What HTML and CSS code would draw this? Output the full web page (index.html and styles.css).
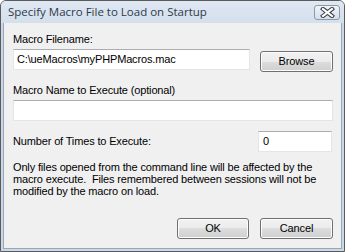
FILE: index.html
```html
<!DOCTYPE html>
<html>
<head>
<meta charset="utf-8">
<link rel="stylesheet" href="styles.css">
</head>
<body>
<div class="window">
  <div class="titlebar">
    <span class="title">Specify Macro File to Load on Startup</span>
    <span class="close"><svg width="15" height="11" viewBox="0 0 15 11"><path d="M3 2 L12 9 M12 2 L3 9" stroke="#3a3f48" stroke-width="4.2" stroke-linecap="square"/><path d="M3 2 L12 9 M12 2 L3 9" stroke="#ffffff" stroke-width="2.2" stroke-linecap="square"/></svg></span>
  </div>
  <div class="client">
    <div class="label l1">Macro Filename:</div>
    <div class="row r1">
      <div class="edit e1">C:\ueMacros\myPHPMacros.mac</div>
      <div class="btn browse">Browse</div>
    </div>
    <div class="label l2">Macro Name to Execute (optional)</div>
    <div class="edit e2"></div>
    <div class="row r3">
      <div class="label">Number of Times to Execute:</div>
      <div class="edit e3">0</div>
    </div>
    <p class="note">Only files opened from the command line will be affected by the macro execute.&nbsp; Files remembered between sessions will not be modified by the macro on load.</p>
    <div class="row buttons">
      <div class="btn ok">OK</div>
      <div class="btn cancel">Cancel</div>
    </div>
  </div>
</div>
</body>
</html>
```

FILE: styles.css
```css
html, body {
  margin: 0;
  padding: 0;
  background: #ffffff;
}
.window {
  width: 345px;
  height: 252px;
  box-sizing: border-box;
  border: 1px solid #5b5b5b;
  border-radius: 6px 6px 0 0;
  background: #cbd8e7;
  display: flex;
  flex-direction: column;
  overflow: hidden;
}
.titlebar {
  height: 22px;
  flex: none;
  display: flex;
  align-items: center;
  justify-content: space-between;
  padding: 0 4px 0 7px;
  background: linear-gradient(to bottom, #dfe8f3, #d3dfec);
}
.title {
  font-family: "Open Sans", sans-serif;
  font-size: 11.5px;
  color: #2f3947;
  margin-top: -1px;
}
.close {
  width: 26px;
  height: 15px;
  box-sizing: border-box;
  border: 1px solid #8e99a8;
  border-radius: 3px;
  background: linear-gradient(to bottom, #eef3f9, #d5dfeb);
  display: flex;
  align-items: center;
  justify-content: center;
  margin-top: 1px;
}
.client {
  flex: 1;
  margin: 0 2px 2px 2px;
  border: 1px solid #98a6b8;
  border-top: none;
  background: #f0f0f0;
  padding: 10px 8px 0 9px;
  font-family: "Liberation Sans", Arial, sans-serif;
  font-size: 11px;
  letter-spacing: -0.15px;
  color: #000;
  display: flex;
  flex-direction: column;
}
.label {
  line-height: 13px;
  height: 13px;
}
.row {
  display: flex;
}
.r1 {
  margin-top: 3px;
  align-items: flex-start;
  justify-content: space-between;
}
.edit {
  box-sizing: border-box;
  height: 21px;
  background: #fff;
  border: 1px solid #e2e5ea;
  border-top-color: #abadb3;
  line-height: 19px;
  padding-left: 3px;
}
.e1 {
  width: 237px;
}
.btn {
  box-sizing: border-box;
  height: 21px;
  border: 1px solid #707070;
  border-radius: 3px;
  background: linear-gradient(to bottom, #f2f2f2 0%, #ebebeb 50%, #dddddd 50%, #cfcfcf 100%);
  box-shadow: inset 0 0 0 1px #fcfcfc;
  text-align: center;
  line-height: 19px;
}
.browse {
  width: 73px;
  margin-top: 2px;
}
.l2 {
  margin-top: 12px;
}
.e2 {
  margin-top: 3px;
  width: 320px;
}
.r3 {
  margin-top: 10px;
  align-items: center;
  justify-content: space-between;
}
.e3 {
  width: 74px;
  padding-left: 4px;
  margin-right: 1px;
}
.note {
  margin: 9px 0 0 0;
  line-height: 12px;
  width: 318px;
}
.buttons {
  margin-top: auto;
  margin-bottom: 9px;
  justify-content: flex-end;
  gap: 11px;
}
.ok {
  width: 72px;
}
.cancel {
  width: 73px;
}
```
